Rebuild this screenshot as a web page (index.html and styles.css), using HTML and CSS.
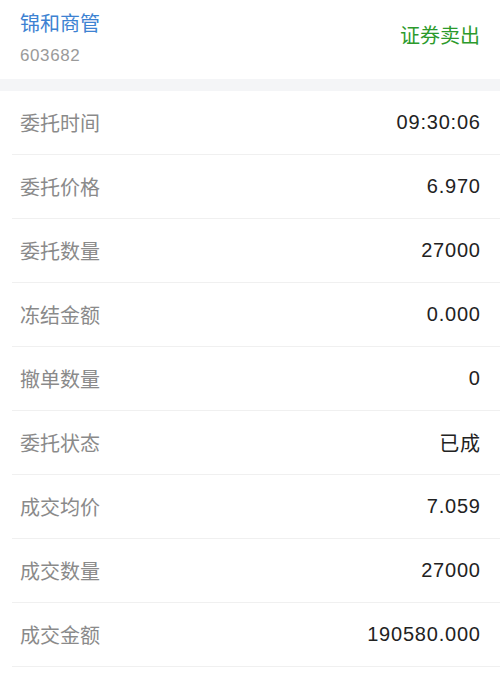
FILE: index.html
```html
<!DOCTYPE html>
<html lang="zh">
<head>
<meta charset="utf-8">
<link rel="stylesheet" href="styles.css">
</head>
<body>
<div class="header">
  <div class="stock">
    <div class="name">锦和商管</div>
    <div class="code">603682</div>
  </div>
  <div class="type">证券卖出</div>
</div>
<div class="band"></div>
<div class="list">
  <div class="row"><span class="label">委托时间</span><span class="value">09:30:06</span></div>
  <div class="row"><span class="label">委托价格</span><span class="value">6.970</span></div>
  <div class="row"><span class="label">委托数量</span><span class="value">27000</span></div>
  <div class="row"><span class="label">冻结金额</span><span class="value">0.000</span></div>
  <div class="row"><span class="label">撤单数量</span><span class="value">0</span></div>
  <div class="row"><span class="label">委托状态</span><span class="value">已成</span></div>
  <div class="row"><span class="label">成交均价</span><span class="value">7.059</span></div>
  <div class="row"><span class="label">成交数量</span><span class="value">27000</span></div>
  <div class="row"><span class="label">成交金额</span><span class="value">190580.000</span></div>
</div>
</body>
</html>
```
FILE: styles.css
```css
html, body {
  margin: 0;
  padding: 0;
  background: #ffffff;
  font-family: "Liberation Sans", "Noto Sans CJK SC", sans-serif;
}
.header {
  height: 79px;
  box-sizing: border-box;
  padding: 9px 20px 12px 20px;
  display: flex;
  align-items: center;
  justify-content: space-between;
}
.stock {
  display: flex;
  flex-direction: column;
}
.name {
  font-size: 20px;
  line-height: 28px;
  color: #3d82d2;
}
.code {
  margin-top: 8px;
  font-size: 17px;
  line-height: 20px;
  letter-spacing: 0.6px;
  color: #9a9a9a;
}
.type {
  font-size: 20px;
  line-height: 28px;
  color: #2c9a2c;
  margin-top: -4px;
}
.band {
  height: 12px;
  background: #f4f5f7;
}
.list {
  display: flex;
  flex-direction: column;
  margin-left: 12px;
}
.row {
  height: 64px;
  box-sizing: border-box;
  border-bottom: 1px solid #f0f0f0;
  display: flex;
  align-items: center;
  justify-content: space-between;
  padding: 0 20px 0 8px;
}
.label {
  font-size: 20px;
  color: #8a8a8a;
}
.value {
  font-size: 20px;
  letter-spacing: 0.8px;
  margin-right: -0.8px;
  color: #222222;
}
```
